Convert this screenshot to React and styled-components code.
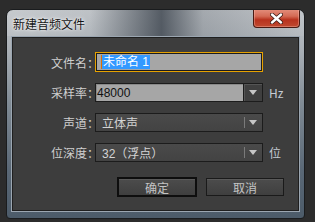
import React from 'react';
import styled, { createGlobalStyle } from 'styled-components';

const Global = createGlobalStyle`
  * { box-sizing: border-box; }
  html, body {
    margin: 0;
    padding: 0;
    width: 315px;
    height: 222px;
    overflow: hidden;
    background: #2c2c2c;
    font-family: "Liberation Sans", "Noto Sans CJK SC", sans-serif;
    font-size: 12px;
  }
`;

const Win = styled.div`
  margin: 9px 0 0 6px;
  width: 299px;
  height: 210px;
  border: 1px solid #1a1c1e;
  border-radius: 7px 7px 4px 4px;
  background: linear-gradient(180deg, #bfc3c7 0px, #aab0b6 40px, #7f8a94 95px, #5a6876 160px, #4c5b69 210px);
  display: flex;
  flex-direction: column;
  overflow: hidden;
`;

const TitleBar = styled.div`
  height: 26px;
  display: flex;
  justify-content: space-between;
  align-items: flex-start;
  background: linear-gradient(90deg, rgba(255,255,255,0.12) 0%, rgba(255,255,255,0) 28%, rgba(50,58,68,0.75) 52%, rgba(60,68,78,0.2) 66%, rgba(255,255,255,0.05) 100%);
`;

const Title = styled.div`
  padding: 7px 0 0 6px;
  color: #151515;
  font-family: "Noto Sans CJK SC", sans-serif;
  font-size: 12px;
  line-height: 14px;
  text-shadow: 0 0 5px rgba(255,255,255,0.9), 0 0 2px rgba(255,255,255,0.9);
`;

const Close = styled.div`
  width: 47px;
  height: 19px;
  margin: -1px 4px 0 0;
  border: 1px solid #4a1a12;
  border-top: none;
  border-radius: 0 0 4px 4px;
  background: linear-gradient(180deg, #e4907e 0%, #d46a55 40%, #b8321e 60%, #c04a30 100%);
  box-shadow: inset 0 0 0 1px rgba(255,200,190,0.35);
  display: flex;
  align-items: center;
  justify-content: center;
`;

const Panel = styled.div`
  flex: 1;
  margin: 0 4px 6px 4px;
  border: 1px solid #9ba6b1;
  box-shadow: inset 0 0 0 1px #1f1f1f;
  background: #3d3d3d;
  padding-top: 15px;
  display: flex;
  flex-direction: column;
`;

const Grid = styled.div`
  display: grid;
  grid-template-columns: 83px 168px auto;
  grid-template-rows: 20px 19px 19px 19px;
  row-gap: 11px;
  align-items: center;
`;

const Label = styled.div`
  text-align: right;
  padding-right: 2px;
  color: #cfcfcf;
  font-family: "Noto Sans CJK SC", sans-serif;
  font-size: 12px;
  font-feature-settings: "halt";
`;

const Unit = styled.div`
  padding-left: 6px;
  color: #c6ccd4;
  font-family: "Noto Sans CJK SC", sans-serif;
  font-size: 12px;
`;

const TextInput = styled.div`
  height: 20px;
  border: 1px solid #e6a100;
  box-shadow: inset 0 0 0 1px #1c1c1c;
  background: #a6a6a6;
  display: flex;
  align-items: center;
  padding-left: 5px;
`;

const Selected = styled.span`
  border-left: 1px solid #e07000;
  background: #3399ff;
  color: #ffffff;
  font-family: "Liberation Sans", "Noto Sans CJK SC", sans-serif;
  font-size: 12px;
  line-height: 14px;
  padding: 0 1px;
`;

const Combo = styled.div`
  height: 19px;
  display: flex;
  border: 1px solid #1c1c1c;
  background: ${p => (p.$light ? '#3f3f3f' : 'linear-gradient(180deg, #4a4a4a, #434343)')};
`;

const Field = styled.div`
  flex: 1;
  display: flex;
  align-items: center;
  padding-left: ${p => (p.$light ? '1px' : '6px')};
  background: ${p => (p.$light ? '#a6a6a6' : 'transparent')};
  border-right: ${p => (p.$light ? '1px solid #1c1c1c' : 'none')};
  box-shadow: ${p => (p.$light ? 'inset 1px 1px 0 #8a8a8a' : 'none')};
  color: ${p => (p.$light ? '#111111' : '#d4d4d4')};
  font-family: "Liberation Sans", "Noto Sans CJK SC", sans-serif;
  font-size: 12px;
`;

const ArrowBox = styled.div`
  position: relative;
  width: 18px;
  display: flex;
  align-items: center;
  justify-content: center;
  box-shadow: ${p => (p.$light ? 'inset 1px 1px 0 #555555' : 'none')};
  &::before {
    content: '';
    display: ${p => (p.$light ? 'none' : 'block')};
    position: absolute;
    left: 0;
    top: 3px;
    bottom: 3px;
    width: 1px;
    background: #7a7a7a;
  }
`;

const Buttons = styled.div`
  margin-top: 15px;
  padding-right: 15px;
  display: flex;
  justify-content: flex-end;
  align-items: center;
  gap: 9px;
`;

const Button = styled.div`
  width: ${p => (p.$default ? '80px' : '78px')};
  height: ${p => (p.$default ? '20px' : '18px')};
  border: ${p => (p.$default ? '2px solid #0e0e0e' : '1px solid #1a1a1a')};
  background: linear-gradient(180deg, #4c4c4c, #3f3f3f);
  box-shadow: inset 0 1px 0 #5a5a5a;
  color: #c4c4c4;
  font-family: "Noto Sans CJK SC", sans-serif;
  font-size: 12px;
  display: flex;
  align-items: center;
  justify-content: center;
`;

const Arrow = () => (
  <svg width="8" height="5" viewBox="0 0 8 5">
    <path d="M0 0 H8 L4 5 Z" fill="#c6c6c6" />
  </svg>
);

const CloseX = () => (
  <svg width="13" height="11" viewBox="0 0 13 11">
    <path d="M2 1.5 L11 9.5 M11 1.5 L2 9.5" stroke="#3a1a14" strokeWidth="4" strokeLinecap="round" />
    <path d="M2 1.5 L11 9.5 M11 1.5 L2 9.5" stroke="#ffffff" strokeWidth="2.4" strokeLinecap="round" />
  </svg>
);

const Select = ({ light, value }) => (
  <Combo $light={light}>
    <Field $light={light}>{value}</Field>
    <ArrowBox $light={light}><Arrow /></ArrowBox>
  </Combo>
);

export default function App() {
  return (
    <>
      <Global />
      <Win>
        <TitleBar>
          <Title>新建音频文件</Title>
          <Close><CloseX /></Close>
        </TitleBar>
        <Panel>
          <Grid>
            <Label>文件名：</Label>
            <TextInput><Selected>未命名 1</Selected></TextInput>
            <div />
            <Label>采样率：</Label>
            <Select light value="48000" />
            <Unit>Hz</Unit>
            <Label>声道：</Label>
            <Select value="立体声" />
            <div />
            <Label>位深度：</Label>
            <Select value="32（浮点）" />
            <Unit>位</Unit>
          </Grid>
          <Buttons>
            <Button $default>确定</Button>
            <Button>取消</Button>
          </Buttons>
        </Panel>
      </Win>
    </>
  );
}
